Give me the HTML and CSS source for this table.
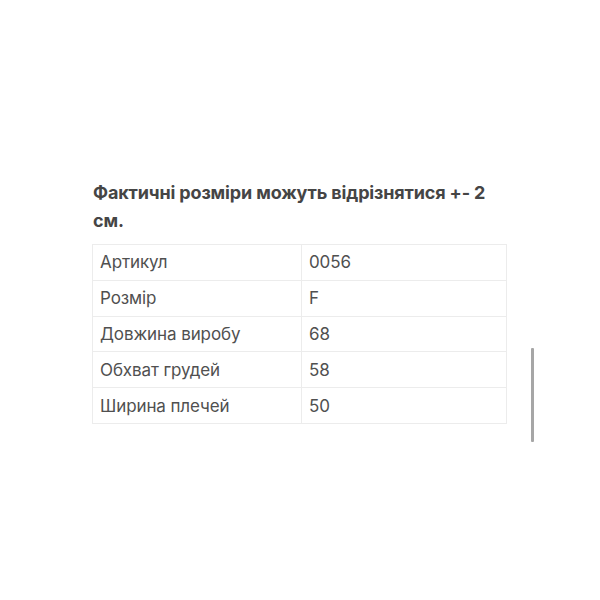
FILE: index.html
```html
<!DOCTYPE html>
<html lang="uk">
<head>
<meta charset="utf-8">
<link rel="stylesheet" href="styles.css">
</head>
<body>
<div class="page">
  <div class="content">
    <h2 class="title">Фактичні розміри можуть відрізнятися +- 2 см.</h2>
    <table class="specs">
      <tr><td>Артикул</td><td>0056</td></tr>
      <tr><td>Розмір</td><td>F</td></tr>
      <tr><td>Довжина виробу</td><td>68</td></tr>
      <tr><td>Обхват грудей</td><td>58</td></tr>
      <tr><td>Ширина плечей</td><td>50</td></tr>
    </table>
  </div>
  <div class="scrollbar"></div>
</div>
</body>
</html>
```
FILE: styles.css
```css
html, body {
  margin: 0;
  padding: 0;
  background: #ffffff;
}
.page {
  position: relative;
  width: 600px;
  height: 600px;
  font-family: Inter, "Noto Sans", sans-serif;
  color: #4a4a4a;
}
.content {
  padding-top: 179px;
  margin-left: 92px;
  width: 415px;
}
.title {
  margin: 0 0 9px 1px;
  font-size: 18px;
  font-weight: 700;
  letter-spacing: -0.15px;
  line-height: 28px;
  color: #454545;
  width: 400px;
}
.specs {
  width: 415px;
  border-collapse: collapse;
  font-size: 17px;
  letter-spacing: -0.1px;
  color: #505050;
}
.specs td {
  border: 1px solid #ececec;
  height: 34.8px;
  padding: 0 7px;
  vertical-align: middle;
}
.specs td:first-child {
  width: 194px;
}
.scrollbar {
  position: absolute;
  left: 531px;
  top: 348px;
  width: 3px;
  height: 94px;
  background: #a6a6a6;
  border-radius: 1px;
}
```
